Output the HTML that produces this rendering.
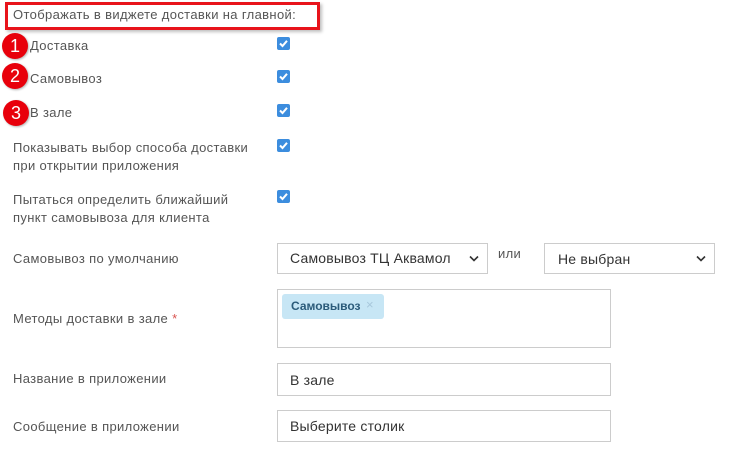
<!DOCTYPE html>
<html><head><meta charset="utf-8"><style>
body{margin:0;width:740px;height:454px;background:#fff;position:relative;overflow:hidden;font-family:"Liberation Sans","DejaVu Sans",sans-serif;font-size:13px;color:#555;letter-spacing:0.35px}
.a{position:absolute;white-space:nowrap}
.cb{position:absolute;left:277px;width:13px;height:13px;background:#3c8dde;border-radius:2px}
.cb svg{position:absolute;left:2px;top:2px}
.num{position:absolute;width:26px;height:26px;border-radius:50%;background:#e8000b;color:#fff;font-size:18px;text-align:center;line-height:26px;box-shadow:1px 1px 2px rgba(0,0,0,.3);letter-spacing:0}
.box{position:absolute;border:1px solid #ccc;background:#fff;box-sizing:border-box;font-size:14px;color:#333}
.chev{position:absolute;right:8px;top:50%;margin-top:-4px}
</style></head><body>
<div style="position:absolute;left:5px;top:2px;width:315px;height:28px;border:3px solid #e8131b;box-sizing:border-box;box-shadow:2px 2px 3px rgba(0,0,0,.25)"></div>
<div class="a" style="left:13px;top:7px">Отображать в виджете доставки на главной:</div>

<div class="num" style="left:2px;top:33px">1</div>
<div class="num" style="left:2px;top:63px">2</div>
<div class="num" style="left:3px;top:100px">3</div>
<div class="a" style="left:30px;top:38px">Доставка</div>
<div class="a" style="left:30px;top:71px">Самовывоз</div>
<div class="a" style="left:30px;top:105px">В зале</div>

<div class="cb" style="top:37px"><svg width="9" height="9" viewBox="0 0 9 9"><path d="M1 4.5L3.5 7L8 1.8" stroke="#fff" stroke-width="2" fill="none"/></svg></div>
<div class="cb" style="top:70px"><svg width="9" height="9" viewBox="0 0 9 9"><path d="M1 4.5L3.5 7L8 1.8" stroke="#fff" stroke-width="2" fill="none"/></svg></div>
<div class="cb" style="top:104px"><svg width="9" height="9" viewBox="0 0 9 9"><path d="M1 4.5L3.5 7L8 1.8" stroke="#fff" stroke-width="2" fill="none"/></svg></div>
<div class="cb" style="top:139px"><svg width="9" height="9" viewBox="0 0 9 9"><path d="M1 4.5L3.5 7L8 1.8" stroke="#fff" stroke-width="2" fill="none"/></svg></div>
<div class="cb" style="top:190px"><svg width="9" height="9" viewBox="0 0 9 9"><path d="M1 4.5L3.5 7L8 1.8" stroke="#fff" stroke-width="2" fill="none"/></svg></div>

<div class="a" style="left:13px;top:139px;line-height:18px">Показывать выбор способа доставки<br>при открытии приложения</div>
<div class="a" style="left:13px;top:191px;line-height:18px">Пытаться определить ближайший<br>пункт самовывоза для клиента</div>

<div class="a" style="left:13px;top:251px">Самовывоз по умолчанию</div>
<div class="box" style="left:277px;top:243px;width:211px;height:31px;letter-spacing:0.2px"><span class="a" style="left:12px;top:6px">Самовывоз ТЦ Аквамол</span><svg class="chev" width="10" height="7" viewBox="0 0 10 7"><path d="M1 1.5L5 5.5L9 1.5" stroke="#333" stroke-width="1.6" fill="none"/></svg></div>
<div class="a" style="left:498px;top:246px">или</div>
<div class="box" style="left:544px;top:243px;width:171px;height:31px;letter-spacing:0.2px"><span class="a" style="left:13px;top:7px">Не выбран</span><svg class="chev" width="10" height="7" viewBox="0 0 10 7"><path d="M1 1.5L5 5.5L9 1.5" stroke="#333" stroke-width="1.6" fill="none"/></svg></div>

<div class="a" style="left:13px;top:311px">Методы доставки в зале <span style="color:#d9534f">*</span></div>
<div class="box" style="left:277px;top:289px;width:334px;height:59px"><div style="position:absolute;left:4px;top:4px;width:102px;height:25px;background:#c7e6f5;border-radius:3px"><span class="a" style="left:9px;top:5px;font-size:12px;font-weight:bold;color:#2b5b7a;letter-spacing:0">Самовывоз</span><span class="a" style="left:84px;top:3px;color:#a8c8dc;font-size:13px">×</span></div></div>

<div class="a" style="left:13px;top:371px">Название в приложении</div>
<div class="box" style="left:277px;top:363px;width:334px;height:33px;letter-spacing:0.2px"><span class="a" style="left:12px;top:8px">В зале</span></div>
<div class="a" style="left:13px;top:419px">Сообщение в приложении</div>
<div class="box" style="left:277px;top:410px;width:334px;height:32px;letter-spacing:0.2px"><span class="a" style="left:12px;top:7px">Выберите столик</span></div>
</body></html>
